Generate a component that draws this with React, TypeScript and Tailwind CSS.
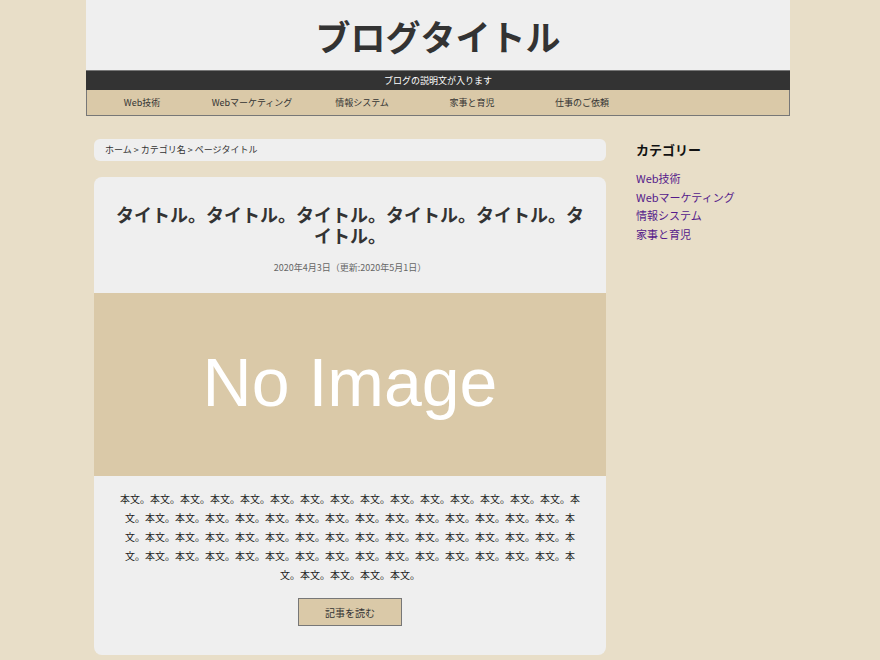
const NAV = ['Web技術', 'Webマーケティング', '情報システム', '家事と育児', '仕事のご依頼']
const CATEGORIES = ['Web技術', 'Webマーケティング', '情報システム', '家事と育児']

const body = '本文。'.repeat(65)

export default function App() {
  return (
    <div className="min-h-[660px] bg-[#e8dec8] font-['Noto_Sans_CJK_JP',sans-serif] text-[#333]">
      <div className="ml-[86px] w-[704px]">
        {/* Header */}
        <header>
          <div className="flex h-[70px] items-center justify-center bg-[#efefef]">
            <h1 className="text-[35px] leading-none font-bold text-[#333]">ブログタイトル</h1>
          </div>
          <div className="flex h-[20px] items-center justify-center border-t border-[#777] bg-[#333]">
            <p className="text-[9px] leading-none text-white">ブログの説明文が入ります</p>
          </div>
          <nav className="flex h-[26px] items-center border-x border-b border-[#777] bg-[#dac9a8]">
            {NAV.map((item) => (
              <a key={item} className="w-[110px] text-center text-[9px] leading-none text-[#333]">
                {item}
              </a>
            ))}
          </nav>
        </header>

        <div className="flex gap-[30px] pt-[23px] pl-[8px]">
          {/* Main column */}
          <main className="w-[512px]">
            <div className="flex h-[22px] items-center rounded-[6px] bg-[#efefef] px-[11px] text-[9px] text-[#333]">
              ホーム &gt; カテゴリ名 &gt; ページタイトル
            </div>

            <article className="mt-[16px] rounded-[8px] bg-[#efefef] pt-[27px] pb-[29px]">
              <h2 className="px-[20px] text-center text-[18px] leading-[21px] font-bold text-[#333]">
                タイトル。タイトル。タイトル。タイトル。タイトル。タイトル。
              </h2>
              <p className="mt-[16px] text-center text-[9px] leading-[12px] text-[#666]">
                2020年4月3日（更新:2020年5月1日）
              </p>
              <div className="mt-[19px] flex h-[183px] items-center justify-center bg-[#dac9a8] pb-[6px]">
                <span className="font-['Liberation_Sans',sans-serif] text-[68px] leading-none text-white">
                  No Image
                </span>
              </div>
              <p className="px-[22px] pt-[13px] text-center text-[10px] leading-[19px] text-[#222]">{body}</p>
              <div className="mt-[14px] flex justify-center">
                <button className="h-[28px] w-[104px] border border-[#777] bg-[#dac9a8] text-[10px] text-[#333]">
                  記事を読む
                </button>
              </div>
            </article>
          </main>

          {/* Sidebar */}
          <aside className="w-[150px] pt-[2px]">
            <h3 className="text-[13px] leading-[18px] font-bold text-[#111]">カテゴリー</h3>
            <ul className="mt-[10px] text-[11px] leading-[18.7px]">
              {CATEGORIES.map((c) => (
                <li key={c}>
                  <a className="text-[#551a8b]">{c}</a>
                </li>
              ))}
            </ul>
          </aside>
        </div>
      </div>
    </div>
  )
}
